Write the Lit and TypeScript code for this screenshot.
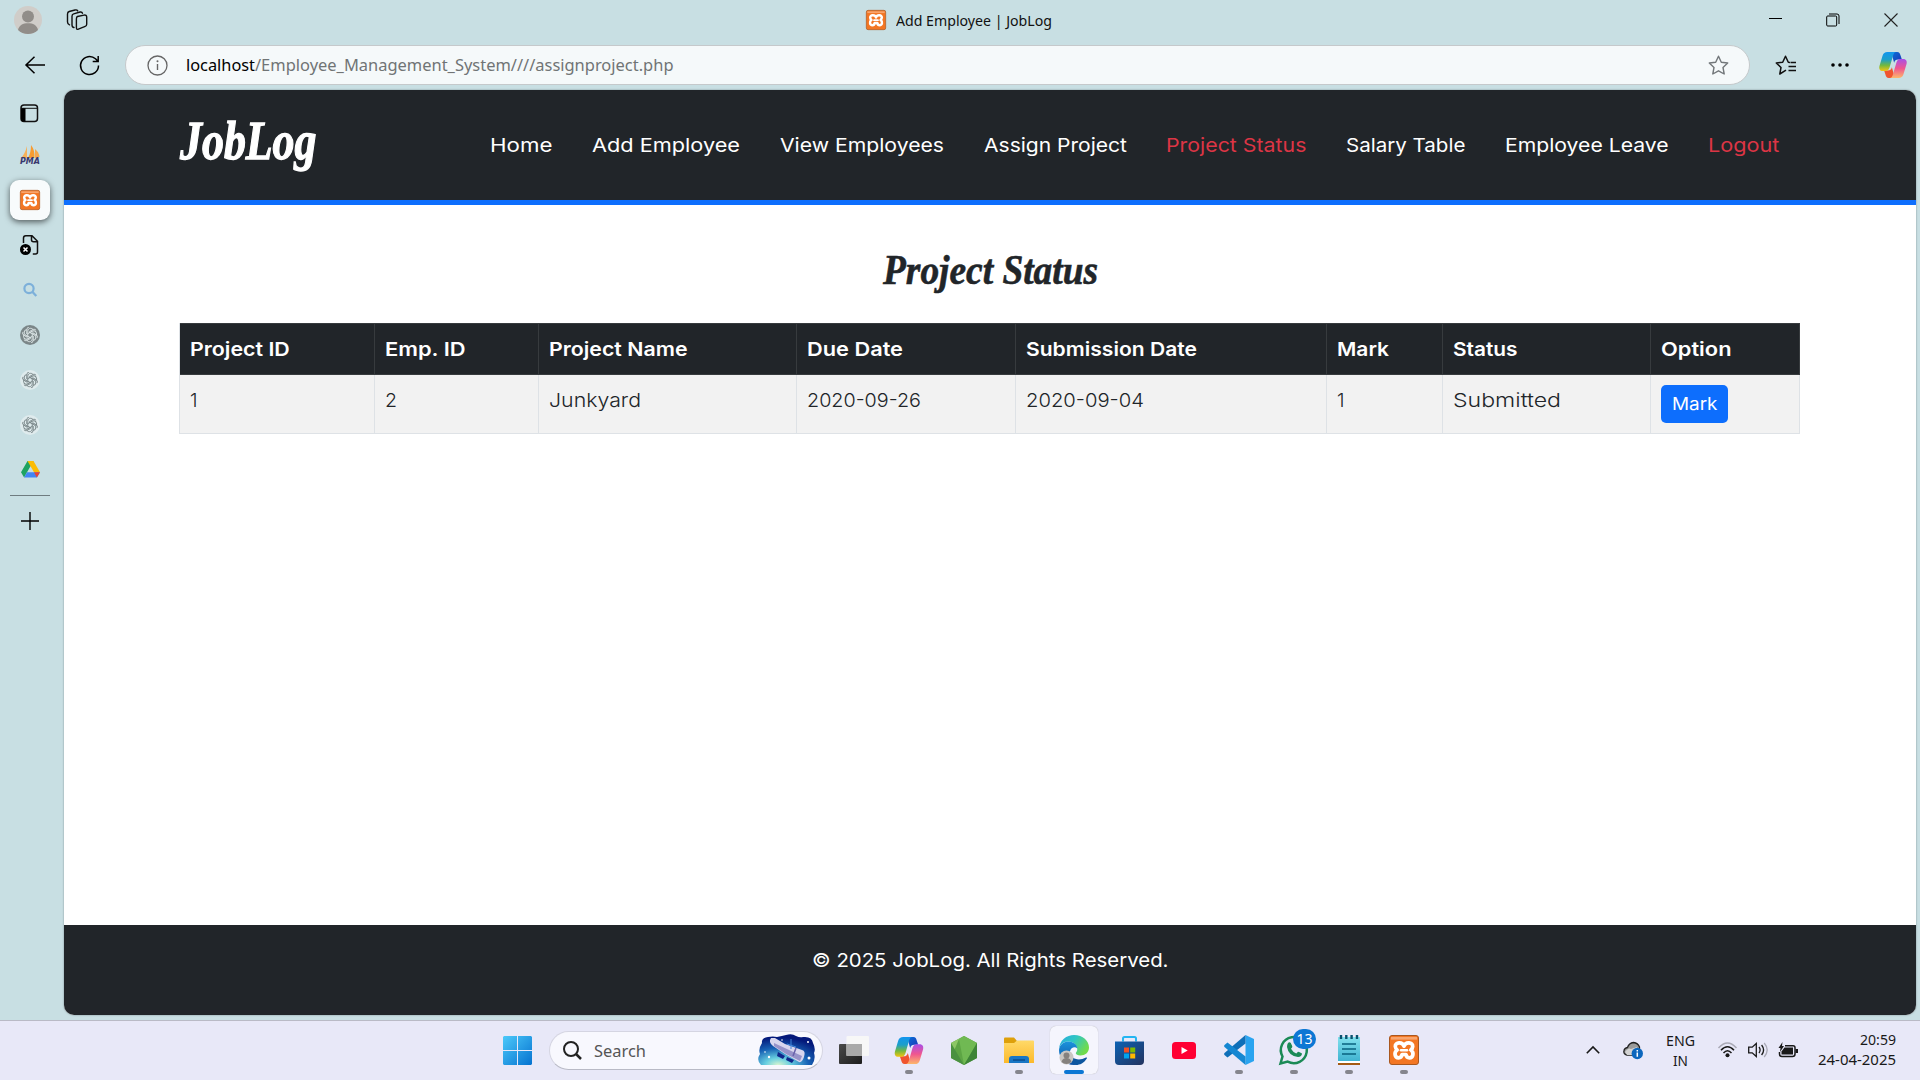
import { LitElement, html, css, svg, nothing } from "lit";
import { customElement, property } from "lit/decorators.js";

/** One line of text scaled horizontally to a given width. */
@customElement("fit-text")
class FitText extends LitElement {
  @property({ type: Number }) width = 0;
  static styles = css`
    :host { display: inline-block; white-space: pre; text-align: left; }
    .line { display: inline-block; transform-origin: 0 50%; }
  `;
  render() {
    return html`<span class="line"><slot></slot></span>`;
  }
  firstUpdated() {
    const line = this.renderRoot.querySelector(".line") as HTMLElement;
    const natural = line.getBoundingClientRect().width;
    this.style.width = `${this.width}px`;
    line.style.transform = `scaleX(${this.width / natural})`;
  }
}

const xampp = svg`
  <rect x="0.500" y="0.500" width="29" height="29" rx="2.500" fill="#f37623" stroke="#a9571f"/>
  <path d="M2 2h26v2.600H2z" fill="#f8a56d"/>
  <path d="M15 11.200C13.500 6.500 6 7 6.300 11.500q.2 2.300 1.900 3.500C4.800 17 5.500 22.800 9.600 22.800q2.900 0 3.400-3.300h4q.5 3.300 3.400 3.300C24.500 22.800 25.200 17 21.800 15q1.700-1.200 1.900-3.500C24 7 16.500 6.500 15 11.200z" fill="none" stroke="#fff" stroke-width="3.700" stroke-linejoin="round"/>
  <path d="M12 15.200h6" stroke="#fff" stroke-width="2.600" stroke-linecap="round"/>`;

const copilot = (id: string) => svg`
  <defs>
    <linearGradient id="${id}a" x1="0" y1="0" x2="0" y2="1"><stop offset="0" stop-color="#1295ef"/><stop offset=".4" stop-color="#1d9fc9"/><stop offset=".7" stop-color="#73b83f"/><stop offset="1" stop-color="#f3c511"/></linearGradient>
    <linearGradient id="${id}b" x1="0" y1="0" x2="0" y2="1"><stop offset="0" stop-color="#a84fe8"/><stop offset=".5" stop-color="#f0568f"/><stop offset="1" stop-color="#fdb86b"/></linearGradient>
    <linearGradient id="${id}c" x1="0" y1="0" x2="1" y2="1"><stop offset="0" stop-color="#0a70d8"/><stop offset="1" stop-color="#1c35b5"/></linearGradient>
  </defs>
  <path d="M13 1h6.500c2.300 0 3 1.600 3.600 3.800L24.500 9h-4c-2.500 0-3.600 1-4.300 3.500z" fill="url(#${id}c)"/>
  <path d="M17 29h-6.500c-2.300 0-3-1.600-3.600-3.800L5.500 21h4c2.500 0 3.600-1 4.300-3.500z" fill="#f0542f"/>
  <path d="M9 1h9.500c-2 0-2.800 1.500-3.500 4l-3.600 12.500C10.500 20.500 9 21.500 6.500 21.500H4C.8 21.500-.3 19 .5 16L3.800 5C4.700 2.200 6.200 1 9 1z" fill="url(#${id}a)"/>
  <path d="M21 29h-9.500c2 0 2.800-1.500 3.500-4l3.600-12.500c.9-3 2.400-4 4.900-4H26c3.200 0 4.300 2.500 3.500 5.500L26.200 25c-.9 2.800-2.400 4-5.200 4z" fill="url(#${id}b)"/>`;

const knot = (ring: string, stroke: string) => svg`
  <circle cx="10" cy="10" r="10" fill="${ring}"/>
  <g fill="none" stroke="${stroke}" stroke-width="0.900">
    ${[0, 60, 120, 180, 240, 300].map(
      (a) => svg`<path transform="rotate(${a} 10 10)" d="M7.800 11.200V6.300c0-3.600 4.600-3.900 5.500-1.200M9.600 7.900V6.400l3.800-2q1.800-.6 2.700 1"/>`
    )}
  </g>`;

const icon = (w: number, h: number, box: string, body: unknown, cls = "") =>
  html`<svg class="icon ${cls}" width="${w}" height="${h}" viewBox="${box}">${body}</svg>`;

const star = "M10.500 1.200l2.800 6 6.400.8-4.700 4.500 1.200 6.500-5.700-3.200L4.800 19 6 12.500 1.300 8l6.400-.8z";

@customElement("browser-top")
class BrowserTop extends LitElement {
  static styles = css`
    :host { display: block; height: 90px; font-family: "Noto Sans", "Open Sans", sans-serif; }
    .icon { display: block; flex: none; overflow: visible; }
    .title-bar { display: flex; align-items: center; height: 40px; padding: 0 22px 0 14px; box-sizing: border-box; }
    .avatar { margin-right: 24px; }
    .caption { display: flex; align-items: center; gap: 10px; margin: 0 auto; padding-left: 61px; font-size: 15px; color: #111; }
    .controls { display: flex; align-items: center; gap: 44px; }
    .tool-bar { display: flex; align-items: center; height: 40px; margin-top: 5px; padding: 0 13px 0 25px; }
    .reload { margin-left: 34px; }
    .address { display: flex; align-items: center; flex: 1; height: 38px; margin-left: 24.500px; padding: 0 20px 0 21px; background: #f5f9fa; border: 1px solid #c5c9cb; border-radius: 20px; font-size: 17px; color: #707475; }
    .url { margin: -2px 0 0 18px; flex: 1; display: flex; }
    .host { color: #000; }
    .tools { display: flex; align-items: center; margin-left: 25px; gap: 34px; }
    .pilot { margin-left: -4px; }
  `;
  render() {
    return html`
      <div class="title-bar">
        ${icon(28, 28, "0 0 28 28", svg`<circle cx="14" cy="14" r="14" fill="#d0cdc9"/><circle cx="14" cy="10.500" r="6" fill="#918d89"/><path d="M4 24c1-5 5-6.800 10-6.800S23 19 24 24c-5 5.200-15 5.200-20 0z" fill="#918d89"/>`, "avatar")}
        ${icon(22, 22, "0 0 22 22", svg`<g fill="none" stroke="#111" stroke-width="1.400" stroke-linejoin="round" stroke-linecap="round"><path d="M11.500 7.500l6.500-1.400q2.700-.4 2.700 2v7.200q0 1.700-1.500 2.100l-6.800 2.800q-2 .8-2-1.600V9.900q0-1.900 1.100-2.400z"/><path d="M8 18.500q-2-.2-2-2.500V7.200q0-1.900 1.700-2.400L14 3q2-.4 2.500 1.200"/><path d="M3.500 15.800Q1.500 15.200 1.500 13V5q0-2 1.700-2.500L9 1q2-.5 2.700.9"/></g>`)}
        <div class="caption">
          ${icon(20, 20, "0 0 30 30", xampp)}
          <fit-text width="156">Add Employee | JobLog</fit-text>
        </div>
        <div class="controls">
          ${icon(13, 14, "0 0 13 14", svg`<path d="M0 5.500h13" stroke="#000"/>`)}
          ${icon(14, 14, "0 0 14 14", svg`<path d="M.7 4q0-1 1-1h8q1 0 1 1v8q0 1-1 1h-8q-1 0-1-1zM3 1h8q2 0 2 2v8" fill="none" stroke="#000"/>`)}
          ${icon(14, 14, "0 0 14 14", svg`<path d="M.5.5l13 13M13.500.5l-13 13" stroke="#222" stroke-width="1.100"/>`)}
        </div>
      </div>
      <div class="tool-bar">
        ${icon(20, 18, "0 0 20 18", svg`<path d="M9.500.8L1 9l8.500 8.200M1 9h19" fill="none" stroke="#000" stroke-width="1.500"/>`)}
        ${icon(21, 21, "0 0 21 21", svg`<path d="M19.500 10.500a9 9 0 1 1-3-6.700l2.500 2.400M19.200 1v5.500h-5.500" fill="none" stroke="#000" stroke-width="1.500"/>`, "reload")}
        <div class="address">
          ${icon(21, 21, "0 0 21 21", svg`<circle cx="10.500" cy="10.500" r="9.500" fill="none" stroke="#666" stroke-width="1.300"/><path d="M10.500 9v6" stroke="#666" stroke-width="1.400"/><circle cx="10.500" cy="6.300" r="1" fill="#666"/>`)}
          <div class="url"><fit-text class="host" width="69">localhost</fit-text><fit-text width="418.500">/Employee_Management_System////assignproject.php</fit-text></div>
          ${icon(21, 20, "0 0 21 20", svg`<path d="${star}" fill="none" stroke="#72777a" stroke-width="1.400" stroke-linejoin="round"/>`)}
        </div>
        <div class="tools">
          ${icon(22, 20, "0 0 22 20", svg`<path d="M11 15.200L4.800 19 6 12.500 1.300 8l6.400-.8 2.800-6 2.800 6 1.700.2M15.500 7.500H21M13.500 11.500H21M13.500 15.500H21" fill="none" stroke="#111" stroke-width="1.500" stroke-linejoin="round"/>`)}
          ${icon(18, 4, "0 0 18 4", svg`<circle cx="2" cy="2" r="1.800"/><circle cx="9" cy="2" r="1.800"/><circle cx="16" cy="2" r="1.800"/>`)}
          ${icon(28, 28, "0 0 30 30", copilot("t"), "pilot")}
        </div>
      </div>
    `;
  }
}

@customElement("tab-rail")
class TabRail extends LitElement {
  static styles = css`
    :host { display: flex; flex-direction: column; align-items: center; width: 60px; }
    .cell { display: flex; align-items: center; justify-content: center; height: 45px; width: 60px; flex: none; }
    .cell.first { height: 43px; margin-bottom: -1px; padding-top: 3px; box-sizing: border-box; }
    .tile { display: flex; align-items: center; justify-content: center; width: 40px; height: 40px; background: #f8fbfc; border-radius: 9px; box-shadow: 0 2px 6px rgba(0, 0, 0, 0.6); }
    .icon { display: block; overflow: visible; }
    .rule { width: 40px; height: 1px; background: #6f7c80; margin: 3px 0 16px; }
    .plus { margin-right: 1px; }
    .pma { font: italic bold 8.500px "DejaVu Sans", sans-serif; }
  `;
  render() {
    const cell = (body: unknown) => html`<div class="cell">${body}</div>`;
    return html`
      <div class="cell first">${icon(19, 19, "0 0 19 19", svg`<rect x="1" y="1" width="16.500" height="16.500" rx="3" fill="none" stroke="#111" stroke-width="1.500"/><path d="M1 4h4.500v13.500H3Q1 17.500 1 15z"/><path d="M1 4.300h16.500" stroke="#111"/>`, "plus")}</div>
      ${cell(icon(20, 20, "0 0 20 20", svg`<path d="M7 1v12H1Q5 9 7 1z" fill="#f7b158"/><path d="M11 0q4 5 3.500 13H8q3-5 3-13z" fill="#f89c31"/><path d="M15 4q4 3 4.500 8L15 13z" fill="#f5a84d"/><text class="pma" x="0" y="19" textLength="20" lengthAdjust="spacingAndGlyphs" fill="#39386e">PMA</text>`))}
      ${cell(html`<div class="tile">${icon(20, 20, "0 0 30 30", xampp)}</div>`)}
      ${cell(icon(20, 20, "0 0 20 20", svg`<path d="M3.500 8V3q0-2.300 2.300-2.300H12l5.500 5.500V17q0 2-2 2h-2.700M11.500 1v3.700q0 2 2 2h4" fill="none" stroke="#111" stroke-width="1.500"/><circle cx="5.500" cy="14.500" r="5.500"/><path d="M3.500 12.500l4 4m0-4l-4 4" stroke="#fff" stroke-width="1.500"/>`))}
      ${cell(icon(14, 14, "0 0 14 14", svg`<circle cx="6" cy="5.500" r="4.600" fill="none" stroke="#7db0da" stroke-width="2.200"/><path d="M9.300 8.800l4 4.200" stroke="#7db0da" stroke-width="2.300"/>`))}
      ${cell(icon(20, 20, "0 0 20 20", knot("#7b8688", "#dce5e6")))}
      ${cell(icon(20, 20, "0 0 20 20", knot("#dfebed", "#798688")))}
      ${cell(icon(20, 20, "0 0 20 20", knot("#dfebed", "#798688")))}
      ${cell(icon(19, 17, "0 0 19 17", svg`<path d="M6.500 0h6l-6.500 11.300-2.900 5.200L0 11.300z" fill="#1ea362"/><path d="M6.500 0h6L19 11.300h-6z" fill="#fbbc04"/><path d="M3.100 16.500L6 11.300h13l-3.100 5.200z" fill="#4285f4"/><path d="M13 11.300h6l-3.100 5.200z" fill="#ea4335"/>`))}
      <div class="rule"></div>
      ${icon(18, 18, "0 0 18 18", svg`<path d="M9 0v18M0 9h18" stroke="#000" stroke-width="1.400"/>`, "plus")}
    `;
  }
}

interface Link { label: string; width: number; red?: boolean }
const links: Link[] = [
  { label: "Home", width: 62.4 },
  { label: "Add Employee", width: 148 },
  { label: "View Employees", width: 164 },
  { label: "Assign Project", width: 143 },
  { label: "Project Status", width: 140.4, red: true },
  { label: "Salary Table", width: 119.4 },
  { label: "Employee Leave", width: 163.6 },
  { label: "Logout", width: 71.4, red: true },
];

interface Column { head: string; headWidth: number; value: string; valueWidth: number }
const columns: Column[] = [
  { head: "Project ID", headWidth: 99.8, value: "1", valueWidth: 7.5 },
  { head: "Emp. ID", headWidth: 80.5, value: "2", valueWidth: 12 },
  { head: "Project Name", headWidth: 138.5, value: "Junkyard", valueWidth: 92 },
  { head: "Due Date", headWidth: 96, value: "2020-09-26", valueWidth: 114 },
  { head: "Submission Date", headWidth: 171, value: "2020-09-04", valueWidth: 118 },
  { head: "Mark", headWidth: 52, value: "1", valueWidth: 7.5 },
  { head: "Status", headWidth: 64.5, value: "Submitted", valueWidth: 108 },
  { head: "Option", headWidth: 70.5, value: "", valueWidth: 0 },
];

@customElement("job-page")
class JobPage extends LitElement {
  static styles = css`
    :host { display: flex; flex-direction: column; width: 1851.500px; height: 925px; background: #fff; border-radius: 10px; overflow: hidden; font-family: Inter, "Open Sans", sans-serif; font-size: 19.300px; color: #212529; box-shadow: 0 0 2px rgba(0, 0, 0, 0.4); }
    header { display: flex; height: 110px; flex: none; background: #212529; border-bottom: 5px solid #0d6efd; padding: 0 135.800px 0 116px; justify-content: space-between; }
    .logo { color: #fff; font: italic bold 54px/54px "Liberation Serif", serif; margin-top: 24px; -webkit-text-stroke: 1.300px #fff; }
    nav { display: flex; gap: 39.600px; color: #fff; margin-top: 41px; line-height: 28px; }
    .red { color: #dc3545; }
    main { flex: 1; padding: 0 115.500px 0 115px; }
    h1 { font: italic bold 42px/48px "Liberation Serif", serif; margin: 41px 0 0 2px; height: 77px; text-align: center; -webkit-text-stroke: 0.600px #212529; }
    .grid { display: grid; grid-template-columns: 195px 164px 258px 219px 311px 116px 208px 149px; width: 1621px; border: solid #dee2e6; border-width: 0 0 1px 1px; box-sizing: border-box; }
    .head { height: 52px; box-sizing: border-box; border: solid #373b3e; border-width: 1px 1px 1px 0; background: #212529; color: #fff; font-weight: 600; padding: 11px 10px; line-height: 28px; }
    .cell { height: 58px; box-sizing: border-box; border-right: 1px solid #dee2e6; background: #f2f2f2; font-weight: 300; padding: 10.500px 10px; line-height: 28px; }
    .cell.action { padding-top: 9.500px; }
    .button { display: flex; align-items: center; justify-content: center; width: 67px; height: 38px; background: #0d6efd; color: #fff; border-radius: 5px; font-size: 17.300px; font-weight: 400; }
    footer { height: 90px; flex: none; background: #212529; color: #fff; text-align: center; padding: 21px 0 0 1px; box-sizing: border-box; line-height: 28px; }
  `;
  render() {
    return html`
      <header>
        <fit-text class="logo" width="136.500">JobLog</fit-text>
        <nav>${links.map((l) => html`<fit-text class=${l.red ? "red" : "link"} width=${l.width}>${l.label}</fit-text>`)}</nav>
      </header>
      <main>
        <h1><fit-text width="215">Project Status</fit-text></h1>
        <div class="grid">
          ${columns.map((c) => html`<div class="head"><fit-text width=${c.headWidth}>${c.head}</fit-text></div>`)}
          ${columns.map((c) => html`<div class="cell ${c.value ? "" : "action"}">${c.value
            ? html`<fit-text width=${c.valueWidth}>${c.value}</fit-text>`
            : html`<span class="button"><fit-text width="45.500">Mark</fit-text></span>`}</div>`)}
        </div>
      </main>
      <footer><fit-text width="356.500">© 2025 JobLog. All Rights Reserved.</fit-text></footer>
    `;
  }
}

interface App { art: unknown; w: number; h: number; box: string; dot?: boolean; active?: boolean; badge?: string }
const apps: App[] = [
  { w: 30, h: 28, box: "0 0 30 28", art: svg`<defs><linearGradient id="tv" x1="0" y1="0" x2="1" y2="1"><stop offset="0" stop-color="#4a4a4a"/><stop offset="1" stop-color="#1d1d1d"/></linearGradient></defs><rect y="8" width="23" height="20" rx="1" fill="url(#tv)"/><rect x="7.500" width="22.500" height="20" rx="1" fill="#f7f7f7"/><path d="M7.500 8H23v12H7.500z" fill="#a9a9a9"/>` },
  { w: 30, h: 29, box: "0 0 30 30", dot: true, art: copilot("b") },
  { w: 26, h: 29, box: "0 0 26 29", art: svg`<path d="M13 0l13 7v15l-13 7L0 22V7z" fill="#5da544"/><path d="M13 0L0 7v15l8-19z" fill="#8cc765"/><path d="M0 7l13 22L0 22z" fill="#4a9140"/><path d="M8 3l5 26L26 7 13 0z" fill="#70b953"/><path d="M13 29L26 7v15z" fill="#3e8538"/>` },
  { w: 30, h: 27, box: "0 0 30 27", dot: true, art: svg`<defs><linearGradient id="fo" x1="0" y1="0" x2="0" y2="1"><stop offset="0" stop-color="#ffd968"/><stop offset="1" stop-color="#fcb92b"/></linearGradient></defs><path d="M0 1.500Q0 .5 1 .5h9l3 3.500v6H0z" fill="#dea00b"/><path d="M0 6h10l3-2.500h16q1 0 1 1V26H0z" fill="url(#fo)"/><path d="M5 26v-4q0-3 3-3h14q3 0 3 3v4z" fill="#1976c5"/><path d="M9 23h12" stroke="#0b4c8c" stroke-width="1.500"/>` },
  { w: 30, h: 30, box: "0 0 30 30", active: true, art: svg`<defs><linearGradient id="ed" x1="0" y1="0" x2="1" y2=".5"><stop offset="0" stop-color="#28a9e0"/><stop offset=".5" stop-color="#2fc6c4"/><stop offset="1" stop-color="#70db4c"/></linearGradient><linearGradient id="ee" x1="0" y1="0" x2="0" y2="1"><stop offset="0" stop-color="#1b93dc"/><stop offset="1" stop-color="#0b4fa3"/></linearGradient></defs><path d="M0 15C0 5 8 0 15 0c9 0 15 6 15 12.500 0 5-4 8-8.500 8-3 0-4.700-1-4.700-2.200 0-1 1.500-1.500 1.500-4C18.300 10 14 6.500 9 6.500 4.500 6.500.5 9.500 0 15z" fill="url(#ed)"/><path d="M0 15c.5-5 4.500-8.500 9-8.500 5 0 9.300 3 9.300 7-2-2.200-6.500-1.500-7.500 3.500C9.500 24 16 29 19 29.500 8 32 0 24 0 15z" fill="url(#ee)"/><path d="M11 17c-.5 6 8 10 16 5.500.8-.4 1.200.4.800 1C25 28 21 30 17 30c-4-1-8-7-6-13z" fill="#0d569f"/><circle cx="7.500" cy="22.500" r="7" fill="#c9c6c3"/><circle cx="7.500" cy="20.500" r="3" fill="#85817e"/><path d="M2.500 27q1-4 5-4t5 4q-5 4-10 0z" fill="#85817e"/>` },
  { w: 29, h: 29, box: "0 0 29 29", art: svg`<defs><linearGradient id="st" x1="0" y1="0" x2="1" y2="1"><stop offset="0" stop-color="#0c62b4"/><stop offset="1" stop-color="#24335f"/></linearGradient></defs><path d="M8 5.500V2.500Q8 1 9.500 1h10Q21 1 21 2.500v3" fill="none" stroke="#24b5f2" stroke-width="2"/><path d="M0 5.500h29V25q0 4-4 4H4q-4 0-4-4z" fill="url(#st)"/><path d="M9 11.500h5v5H9z" fill="#f25022"/><path d="M15.200 11.500h5v5h-5z" fill="#7fba00"/><path d="M9 17.500h5v5H9z" fill="#00a4ef"/><path d="M15.200 17.500h5v5h-5z" fill="#ffb900"/>` },
  { w: 24, h: 17, box: "0 0 24 17", art: svg`<rect width="24" height="17" rx="3.500" fill="#ff0033"/><path d="M9.500 5l6.200 3.500-6.200 3.500z" fill="#fff"/>` },
  { w: 30, h: 30, box: "0 0 30 30", dot: true, art: svg`<path d="M21.500 0L30 4v22l-8.500 4z" fill="#2aa4f0"/><path d="M21.500 0v8.500L3.500 22.500.5 20q-1-1 0-2z" fill="#0f6fb8"/><path d="M21.500 30v-8.500L3.500 7.500.5 10q-1 1 0 2z" fill="#1587d2"/>` },
  { w: 30, h: 30, box: "0 0 30 30", dot: true, badge: "13", art: svg`<path d="M1.500 28.500l2-7A13 13 0 1 1 8.700 26.600z" fill="none" stroke="#1b8a56" stroke-width="2.500"/><path d="M9 8q1.500-1.500 2.800 0l1.500 3.200q.2 1-1.300 2.500 2 3.500 5.300 4.800l1.700-1.700q.7-.4 4 1.800-.2 3.400-4 3.400Q9.500 21 8 12q0-2.600 1-4z" fill="#1b8a56"/>` },
  { w: 22, h: 30, box: "0 0 22 30", dot: true, art: svg`<defs><linearGradient id="np" x1="0" y1="0" x2="0" y2="1"><stop offset="0" stop-color="#82e1ee"/><stop offset="1" stop-color="#40b3d1"/></linearGradient></defs><path d="M0 25h22v5H0z" fill="#fff"/><path d="M0 28h22v2H0z" fill="#a45a14"/><path d="M0 2h22v24H0z" fill="url(#np)"/><path d="M3 0v4m5.300-4v4m5.300-4v4M19 0v4" stroke="#09526f" stroke-width="2.400"/><path d="M4 9h14M4 14h14M4 19h14" stroke="#09617f" stroke-width="1.500"/>` },
  { w: 30, h: 30, box: "0 0 30 30", dot: true, art: xampp },
];

@customElement("task-bar")
class TaskBar extends LitElement {
  static styles = css`
    :host { display: flex; height: 60px; box-sizing: border-box; border-top: 1px solid #b9bac6; background: #e8e8f8; font-family: "Noto Sans", "Open Sans", sans-serif; font-size: 15px; color: #191919; padding: 0 0 1px 503px; align-items: center; }
    .icon { display: block; flex: none; overflow: visible; }
    .search { display: flex; align-items: center; width: 274px; height: 39px; box-sizing: border-box; margin: 0 4px 0 16.500px; padding: 0 7px 0 13px; background: #f8f8fe; border: 1px solid #d5d5e2; border-bottom-color: #b9bac6; border-radius: 20px; font-size: 16.500px; color: #555; }
    .label { flex: 1; margin-left: 12.500px; }
    .app { position: relative; display: flex; align-items: center; justify-content: center; width: 55px; height: 48px; }
    .app.active { width: 48px; margin: 0 3.500px; background: #f5f5fd; border-radius: 6px; box-shadow: 0 0 1px #aaa; }
    .mark { position: absolute; bottom: 0; left: calc(50% - 4px); width: 8px; height: 4px; border-radius: 2px; background: #85858d; }
    .active .mark { left: 14px; width: 20px; background: #0c77d4; }
    .badge { position: absolute; left: 26.500px; top: 3px; width: 23px; height: 20px; line-height: 19px; border-radius: 10px; text-align: center; background: #0c77d4; color: #fff; font-size: 14px; }
    .tray { display: flex; align-items: center; margin-left: auto; padding-right: 24px; }
    .stack { display: flex; flex-direction: column; align-items: center; line-height: 20px; font-size: 15px; margin-top: -1px; }
    .lang { margin: 0 23px 0 23.500px; }
    .clock { align-items: flex-end; margin: -2px 0 0 20px; }
    .cloud { margin-left: 23px; }
    .sound { margin: 0 10px 0 11px; }
  `;
  render() {
    return html`
      ${icon(29, 29, "0 0 29 29", svg`<defs><linearGradient id="wn" gradientUnits="userSpaceOnUse" x1="0" y1="0" x2="29" y2="29"><stop offset="0" stop-color="#4cc9fa"/><stop offset="1" stop-color="#0572d0"/></linearGradient></defs><path d="M1 0h13v14H0V1zM15 0h13l1 1v13H15zM0 15h14v14H1l-1-1zM15 15h14v13l-1 1H15z" fill="url(#wn)"/>`)}
      <div class="search">
        ${icon(19, 19, "0 0 19 19", svg`<circle cx="8" cy="8" r="7" fill="none" stroke="#222" stroke-width="2"/><path d="M13 13l5 5" stroke="#222" stroke-width="2.500"/>`)}
        <span class="label"><fit-text width="52">Search</fit-text></span>
        ${icon(57, 32, "0 0 57 32", svg`<defs><radialGradient id="sk" cx=".35" cy="1" r=".9"><stop offset="0" stop-color="#d9f5d0"/><stop offset=".25" stop-color="#68cfe0"/><stop offset=".6" stop-color="#1762b5"/><stop offset="1" stop-color="#04187a"/></radialGradient></defs><path d="M4 9Q3 4 10 3q5-1 9 0 5-1 9-2 6-2 10 1 4 2 7 1 9-1 10 6 3 6 1 10 2 6-2 12H3q-5-5-1-11-2-5 2-11z" fill="url(#sk)"/><path d="M13 4l4 0 10 6 17 6q4 1 2 7t-5 5l-14-8-12-8q-5-4-2-8z" fill="#d8d6ee"/><path d="M16 9l28 13-2 5-14-7-12-8z" fill="#9793c9"/><path d="M38 14l-3 8" stroke="#6962aa" stroke-width="1.500"/><path d="M20 18l7 4-2 3-6-3zM29 23l7 3-2 3-6-3z" fill="#10268a"/><path d="M33 5v10M29 10l9 3" stroke="#4286da"/><g fill="#fff"><circle cx="51" cy="24" r="1.500"/><circle cx="11" cy="23" r="1.200"/><circle cx="50" cy="8" r="1"/><circle cx="7" cy="18" r=".8"/><circle cx="24" cy="6" r=".8"/></g>`)}
      </div>
      ${apps.map((a) => html`<div class="app ${a.active ? "active" : ""}">${icon(a.w, a.h, a.box, a.art)}${a.dot || a.active ? html`<i class="mark"></i>` : nothing}${a.badge ? html`<span class="badge">${a.badge}</span>` : nothing}</div>`)}
      <div class="tray">
        ${icon(14, 8, "0 0 14 8", svg`<path d="M.8 7.200L7 1l6.200 6.200" fill="none" stroke="#191919" stroke-width="1.600"/>`)}
        ${icon(20, 18, "0 0 20 18", svg`<path d="M4 14Q0 13 1 9.500 1.500 7 4.500 6.500 6 2 10.500 1.500 15 2 16.500 6v8z" fill="#9a9a9a" stroke="#222" stroke-width="1.300"/><path d="M2 11q3-5 6-3l6-2v8H4z" fill="#d3d3d3"/><circle cx="14.300" cy="12.500" r="5.700" fill="#0c66bd"/><path d="M14.300 11.500v4.300M14.300 9v1.500" stroke="#fff" stroke-width="1.500"/>`, "cloud")}
        <div class="stack lang"><fit-text width="29">ENG</fit-text><fit-text width="15">IN</fit-text></div>
        ${icon(19, 16, "0 0 19 16", svg`<g fill="none" stroke-width="1.500"><path d="M.5 6q9-10 18 0" stroke="#aaaab6"/><path d="M3 8.300q6.500-7 13 0M5.500 11q4-4.500 8 0" stroke="#191919"/></g><circle cx="9.500" cy="13.300" r="2" fill="#191919"/>`)}
        ${icon(20, 16, "0 0 20 16", svg`<g fill="none" stroke="#191919" stroke-width="1.300"><path d="M.7 5.200h3.500L8.300 1.500v13l-4.100-3.700H.7zM11 5q2.200 3 0 6M13.600 3q4 5 0 10"/><path d="M16.200 1q6 7 0 14" stroke="#aaaab6"/></g>`, "sound")}
        ${icon(20, 16, "0 0 20 16", svg`<path d="M7 3.700h8q2 0 2 2V12q0 2.500-2.500 2.500H4Q1.500 14.500 1.500 12v-2" fill="none" stroke="#191919" stroke-width="1.500"/><path d="M6.500 5.500H15v7H3.500V9.500z" fill="#191919"/><path d="M17.500 7H20v4h-2.500zM4.500 0L.5 6h2L2 10l4-6H4z" fill="#191919"/>`)}
        <div class="stack clock"><fit-text width="36">20:59</fit-text><fit-text width="78">24-04-2025</fit-text></div>
      </div>
    `;
  }
}

@customElement("app-root")
class AppRoot extends LitElement {
  static styles = css`
    :host { display: flex; flex-direction: column; width: 1920px; height: 1080px; background: #c8dfe3; overflow: hidden; }
    .body { display: flex; gap: 4px; height: 930px; }
  `;
  render() {
    return html`
      <browser-top></browser-top>
      <div class="body"><tab-rail></tab-rail><job-page></job-page></div>
      <task-bar></task-bar>
    `;
  }
}
